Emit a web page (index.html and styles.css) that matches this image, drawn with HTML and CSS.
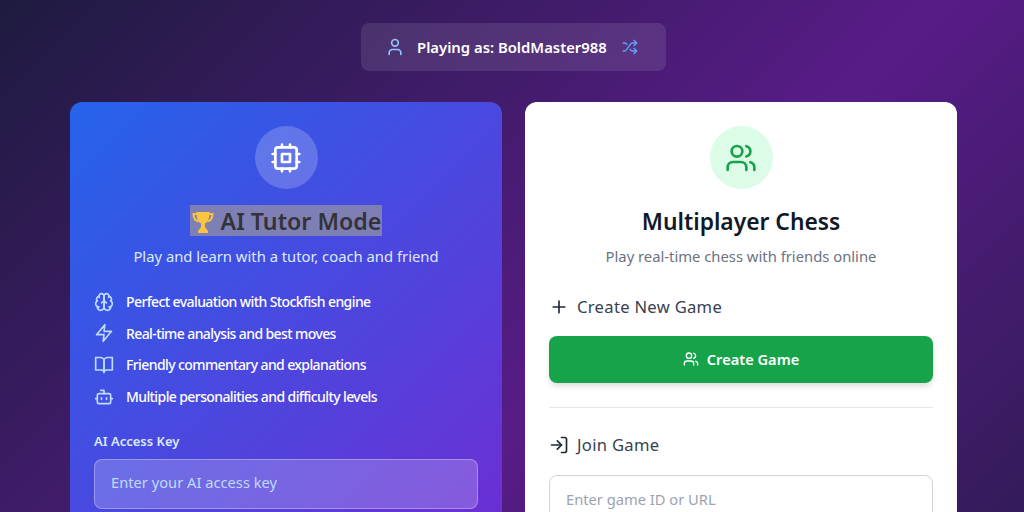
FILE: index.html
```html
<!DOCTYPE html>
<html lang="en">
<head>
    <meta charset="UTF-8">
    <title>Chess Lobby</title>
    <link rel="stylesheet" href="styles.css">
</head>
<body>
    <div class="page">
        <div class="player-bar">
            <svg class="icon icon-user" viewBox="0 0 24 24"><path d="M19 21v-2a4 4 0 0 0-4-4H9a4 4 0 0 0-4 4v2"/><circle cx="12" cy="7" r="4"/></svg>
            <span class="player-name">Playing as: BoldMaster988</span>
            <svg class="icon icon-shuffle" viewBox="0 0 24 24"><path d="M2 18h1.4c1.3 0 2.5-.6 3.3-1.7l6.1-8.6c.7-1.1 2-1.7 3.3-1.7H22"/><path d="m18 2 4 4-4 4"/><path d="M2 6h1.9c1.5 0 2.9.9 3.6 2.2"/><path d="M22 18h-5.9c-1.3 0-2.6-.7-3.3-1.8l-.5-.8"/><path d="m18 14 4 4-4 4"/></svg>
        </div>

        <div class="cards">
            <div class="card card-ai">
                <div class="circle circle-ai">
                    <svg class="icon icon-big" viewBox="0 0 24 24"><rect x="4" y="4" width="16" height="16" rx="2"/><rect x="9" y="9" width="6" height="6"/><path d="M15 2v2M15 20v2M2 15h2M2 9h2M20 15h2M20 9h2M9 2v2M9 20v2"/></svg>
                </div>
                <h2 class="card-title"><span class="selected"><svg class="trophy" viewBox="0 0 24 24"><path class="trophy-handle" d="M6 4H2.500c0 4 1.500 6.500 5 7.500M18 4h3.500c0 4-1.500 6.500-5 7.500"/><path class="trophy-gold" d="M5.500 2h13c0 6-1 10-4.500 11.500V17l3 4v2H7v-2l3-4v-3.500C6.500 12 5.500 8 5.500 2z"/></svg> AI Tutor Mode</span></h2>
                <p class="card-sub card-sub-ai">Play and learn with a tutor, coach and friend</p>

                <ul class="features">
                    <li>
                        <svg class="icon icon-feature" viewBox="0 0 24 24"><path d="M12 5a3 3 0 1 0-5.997.125 4 4 0 0 0-2.526 5.77 4 4 0 0 0 .556 6.588A4 4 0 1 0 12 18Z"/><path d="M12 5a3 3 0 1 1 5.997.125 4 4 0 0 1 2.526 5.77 4 4 0 0 1-.556 6.588A4 4 0 1 1 12 18Z"/><path d="M15 13a4.500 4.500 0 0 1-3-4 4.500 4.500 0 0 1-3 4"/><path d="M17.599 6.500a3 3 0 0 0 .399-1.375"/><path d="M6.003 5.125A3 3 0 0 0 6.401 6.500"/><path d="M3.477 10.896a4 4 0 0 1 .585-.396"/><path d="M19.938 10.500a4 4 0 0 1 .585.396"/><path d="M6 18a4 4 0 0 1-1.967-.516"/><path d="M19.967 17.484A4 4 0 0 1 18 18"/></svg>
                        Perfect evaluation with Stockfish engine
                    </li>
                    <li>
                        <svg class="icon icon-feature" viewBox="0 0 24 24"><path d="M13 2 3 14h9l-1 8 10-12h-9l1-8z"/></svg>
                        Real-time analysis and best moves
                    </li>
                    <li>
                        <svg class="icon icon-feature" viewBox="0 0 24 24"><path d="M2 3h6a4 4 0 0 1 4 4v14a3 3 0 0 0-3-3H2z"/><path d="M22 3h-6a4 4 0 0 0-4 4v14a3 3 0 0 1 3-3h7z"/></svg>
                        Friendly commentary and explanations
                    </li>
                    <li>
                        <svg class="icon icon-feature" viewBox="0 0 24 24"><path d="M12 8V4H8"/><rect x="4" y="8" width="16" height="12" rx="2"/><path d="M2 14h2M20 14h2M15 13v2M9 13v2"/></svg>
                        Multiple personalities and difficulty levels
                    </li>
                </ul>

                <label class="key-label">AI Access Key</label>
                <div class="field field-ai">Enter your AI access key</div>
            </div>

            <div class="card card-multi">
                <div class="circle circle-multi">
                    <svg class="icon icon-big" viewBox="0 0 24 24"><path d="M16 21v-2a4 4 0 0 0-4-4H6a4 4 0 0 0-4 4v2"/><circle cx="9" cy="7" r="4"/><path d="M22 21v-2a4 4 0 0 0-3-3.870"/><path d="M16 3.130a4 4 0 0 1 0 7.750"/></svg>
                </div>
                <h2 class="card-title card-title-multi">Multiplayer Chess</h2>
                <p class="card-sub card-sub-multi">Play real-time chess with friends online</p>

                <div class="section-head section-create">
                    <svg class="icon icon-head" viewBox="0 0 24 24"><path d="M5 12h14M12 5v14"/></svg>
                    Create New Game
                </div>
                <button class="create-btn">
                    <svg class="icon icon-btn" viewBox="0 0 24 24"><path d="M16 21v-2a4 4 0 0 0-4-4H6a4 4 0 0 0-4 4v2"/><circle cx="9" cy="7" r="4"/><path d="M22 21v-2a4 4 0 0 0-3-3.870"/><path d="M16 3.130a4 4 0 0 1 0 7.750"/></svg>
                    Create Game
                </button>
                <hr class="divider">
                <div class="section-head section-join">
                    <svg class="icon icon-head" viewBox="0 0 24 24"><path d="M15 3h4a2 2 0 0 1 2 2v14a2 2 0 0 1-2 2h-4"/><path d="m10 17 5-5-5-5"/><path d="M15 12H3"/></svg>
                    Join Game
                </div>
                <div class="field field-join">Enter game ID or URL</div>
            </div>
        </div>
    </div>
</body>
</html>
```

FILE: styles.css
```css
* {
    margin: 0;
    padding: 0;
    box-sizing: border-box;
}

html, body {
    height: 100%;
    overflow: hidden;
}

body {
    font-family: "Noto Sans", sans-serif;
}

.page {
    height: 860px;
    padding-top: 23px;
    background: linear-gradient(135deg, #1e1b3f, #581c87, #1e1b3f);
}

.icon {
    fill: none;
    stroke: currentColor;
    stroke-width: 2;
    stroke-linecap: round;
    stroke-linejoin: round;
    flex-shrink: 0;
}

.player-bar {
    display: flex;
    align-items: center;
    width: 305px;
    height: 48px;
    margin-left: 361px;
    padding-left: 24px;
    background-color: rgba(255, 255, 255, 0.1);
    border-radius: 8px;
}

.icon-user {
    width: 20px;
    height: 20px;
    color: #93c5fd;
}

.player-name {
    margin-left: 12px;
    color: white;
    font-size: 14.850px;
    font-weight: 600;
}

.icon-shuffle {
    width: 16px;
    height: 16px;
    margin-left: 15px;
    color: #60a5fa;
}

.cards {
    display: flex;
    gap: 23px;
    width: 887px;
    margin: 31px 0 0 70px;
}

.card {
    width: 432px;
    height: 640px;
    padding: 24px;
    border-radius: 12px;
}

.card-ai {
    background: linear-gradient(135deg, #2563eb, #7e22ce);
    color: white;
}

.card-multi {
    background-color: white;
}

.circle {
    display: flex;
    align-items: center;
    justify-content: center;
    width: 63px;
    height: 63px;
    margin: 0 auto 16px;
    border-radius: 50%;
}

.circle-ai {
    background-color: rgba(255, 255, 255, 0.2);
}

.circle-multi {
    background-color: #dcfce7;
    color: #16a34a;
}

.icon-big {
    width: 32px;
    height: 32px;
}

.card-title {
    height: 32px;
    font-size: 23.200px;
    font-weight: 600;
    line-height: 33px;
    text-align: center;
}

.card-title-multi {
    color: #111827;
    font-size: 22.800px;
}

.selected {
    display: inline-block;
    height: 31px;
    padding: 0 1px;
    background-color: #7e7fb5;
    color: #333338;
    vertical-align: top;
}

.trophy {
    width: 24px;
    height: 24px;
    vertical-align: -4px;
}

.trophy-gold {
    fill: #f7c53f;
}

.trophy-handle {
    fill: none;
    stroke: #f7c53f;
    stroke-width: 2;
}

.card-sub {
    margin-top: 8px;
    font-size: 14.800px;
    line-height: 22px;
    text-align: center;
}

.card-sub-ai {
    color: #dbeafe;
}

.card-sub-multi {
    color: #6b7280;
}

.features {
    margin-top: 19px;
    list-style: none;
}

.features li {
    display: flex;
    align-items: center;
    gap: 12px;
    height: 31.600px;
    font-size: 14px;
    font-weight: 500;
    letter-spacing: -0.6px;
}

.icon-feature {
    width: 20px;
    height: 20px;
    color: #bfdbfe;
}

.key-label {
    display: block;
    margin-top: 19px;
    font-size: 13px;
    font-weight: 600;
    line-height: 20px;
    color: #dbeafe;
}

.field {
    height: 50px;
    margin-top: 8px;
    padding-left: 16px;
    font-size: 14.700px;
    line-height: 46px;
    border-radius: 8px;
}

.field-ai {
    line-height: 45px;
    background-color: rgba(255, 255, 255, 0.2);
    border: 1px solid rgba(255, 255, 255, 0.3);
    color: #bfdbfe;
}

.field-join {
    margin-top: 18px;
    background-color: white;
    border: 1px solid #d1d5db;
    color: #9ca3af;
}

.section-head {
    display: flex;
    align-items: center;
    gap: 8px;
    font-size: 16.600px;
    font-weight: 400;
    letter-spacing: 0.3px;
    line-height: 24px;
    color: #374151;
}

.section-create {
    margin-top: 28px;
}

.section-join {
    margin-top: 25px;
}

.icon-head {
    width: 20px;
    height: 20px;
    color: #1f2937;
}

.create-btn {
    display: flex;
    align-items: center;
    justify-content: center;
    gap: 8px;
    width: 100%;
    height: 47px;
    margin-top: 17px;
    padding-bottom: 1px;
    background-color: #16a34a;
    border: none;
    border-radius: 8px;
    box-shadow: 0 4px 6px -1px rgba(0, 0, 0, 0.15);
    color: white;
    font-family: inherit;
    font-size: 14.600px;
    font-weight: 600;
}

.icon-btn {
    width: 16px;
    height: 16px;
}

.divider {
    margin-top: 24px;
    border: none;
    border-top: 1px solid #e5e7eb;
}
```
